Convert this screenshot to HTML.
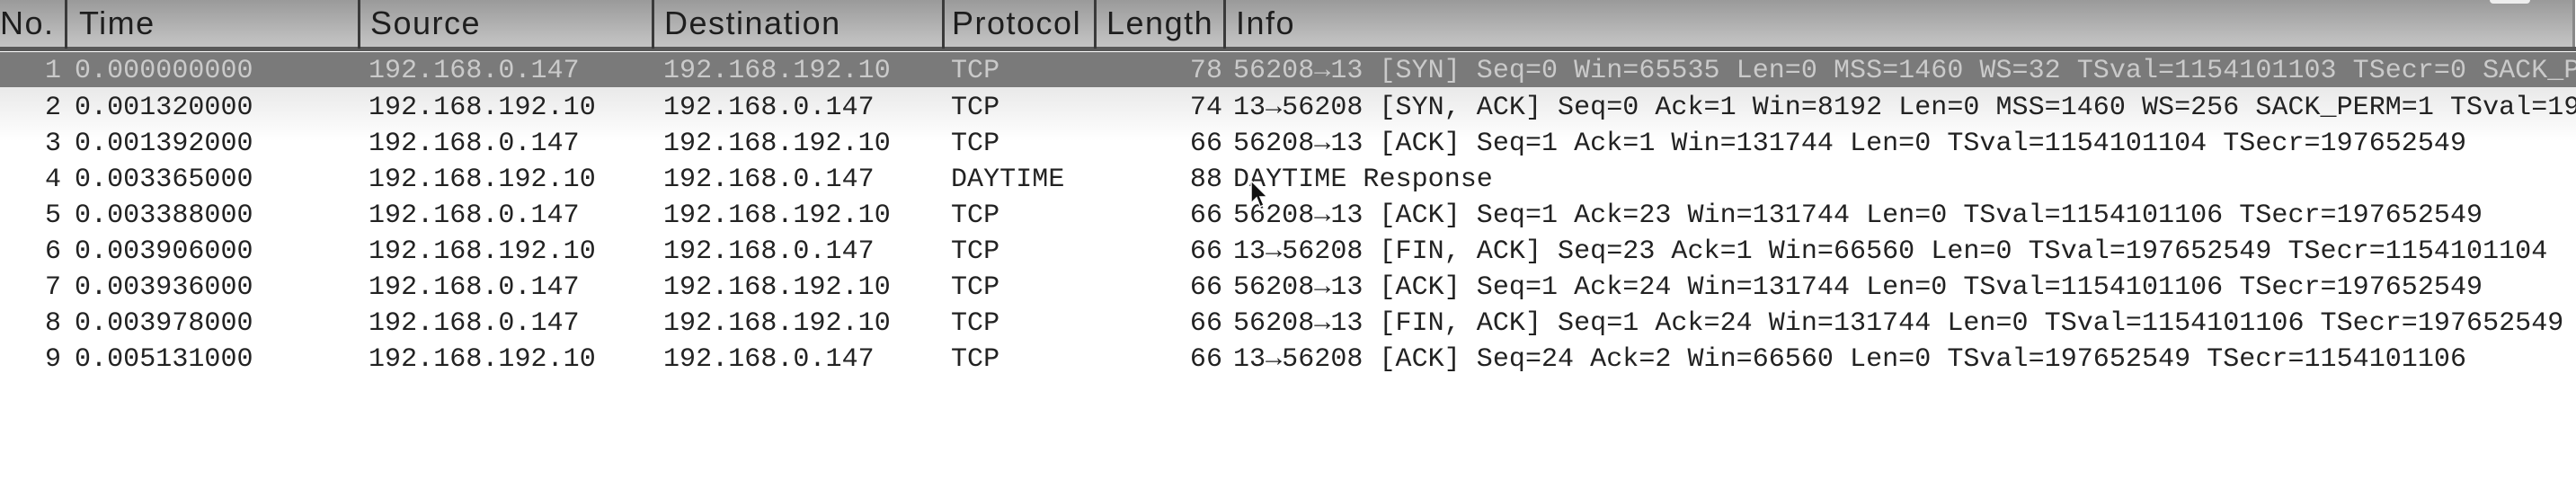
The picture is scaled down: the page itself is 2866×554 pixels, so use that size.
<!DOCTYPE html>
<html><head><meta charset="utf-8"><style>
html,body{margin:0;padding:0;width:2866px;height:554px;overflow:hidden;background:#fff;}
#hdr{position:absolute;left:0;top:0;width:2862px;height:53px;background:linear-gradient(#9a9a9a,#c6c6c6);border-right:3px solid #888;}
#hl{position:absolute;left:0;top:52px;width:2866px;height:5px;background:#5a5a5a;}
.h{position:absolute;top:2px;font-family:"Liberation Sans",sans-serif;font-size:36px;color:#1e1e1e;line-height:48px;letter-spacing:1.5px;}
.sep{position:absolute;top:0;width:3px;height:54px;background:#3a3a3a;}
#sel{position:absolute;left:0;top:58px;width:2866px;height:39px;background:#7a7a7a;}
#below{position:absolute;left:0;top:97px;width:2866px;height:60px;background:linear-gradient(#e9e9e9,#fff);}
.r{position:absolute;left:0;height:40px;line-height:40px;font-family:"Liberation Mono",monospace;font-size:30px;color:#222;white-space:pre;letter-spacing:0.05px;}
.r span{position:absolute;top:0;}
.s{color:#cacaca;}
.n{right:2798px;text-align:right;}
.len{right:1506px;text-align:right;}
</style></head><body>
<div id="hdr"></div>
<div id="hl"></div>
<div class="h" style="left:0">No.</div>
<div class="sep" style="left:72px"></div>
<div class="h" style="left:88px">Time</div>
<div class="sep" style="left:398px"></div>
<div class="h" style="left:412px">Source</div>
<div class="sep" style="left:725px"></div>
<div class="h" style="left:739px">Destination</div>
<div class="sep" style="left:1048px"></div>
<div class="h" style="left:1059px">Protocol</div>
<div class="sep" style="left:1217px"></div>
<div class="h" style="left:1231px">Length</div>
<div class="sep" style="left:1361px"></div>
<div class="h" style="left:1375px">Info</div>
<div style="position:absolute;left:2770px;top:0;width:45px;height:4px;background:#eee;border-radius:0 0 4px 4px"></div>
<div id="sel"></div>
<div id="below"></div>

<div class="r s" style="top:59px;width:2866px"><span class="n">1</span><span style="left:83px">0.000000000</span><span style="left:410px">192.168.0.147</span><span style="left:738px">192.168.192.10</span><span style="left:1058px">TCP</span><span class="len">78</span><span style="left:1372px">56208→13 [SYN] Seq=0 Win=65535 Len=0 MSS=1460 WS=32 TSval=1154101103 TSecr=0 SACK_PERM=1</span></div>
<div class="r" style="top:100px;width:2866px"><span class="n">2</span><span style="left:83px">0.001320000</span><span style="left:410px">192.168.192.10</span><span style="left:738px">192.168.0.147</span><span style="left:1058px">TCP</span><span class="len">74</span><span style="left:1372px">13→56208 [SYN, ACK] Seq=0 Ack=1 Win=8192 Len=0 MSS=1460 WS=256 SACK_PERM=1 TSval=197652549</span></div>
<div class="r" style="top:140px;width:2866px"><span class="n">3</span><span style="left:83px">0.001392000</span><span style="left:410px">192.168.0.147</span><span style="left:738px">192.168.192.10</span><span style="left:1058px">TCP</span><span class="len">66</span><span style="left:1372px">56208→13 [ACK] Seq=1 Ack=1 Win=131744 Len=0 TSval=1154101104 TSecr=197652549</span></div>
<div class="r" style="top:180px;width:2866px"><span class="n">4</span><span style="left:83px">0.003365000</span><span style="left:410px">192.168.192.10</span><span style="left:738px">192.168.0.147</span><span style="left:1058px">DAYTIME</span><span class="len">88</span><span style="left:1372px">DAYTIME Response</span></div>
<div class="r" style="top:220px;width:2866px"><span class="n">5</span><span style="left:83px">0.003388000</span><span style="left:410px">192.168.0.147</span><span style="left:738px">192.168.192.10</span><span style="left:1058px">TCP</span><span class="len">66</span><span style="left:1372px">56208→13 [ACK] Seq=1 Ack=23 Win=131744 Len=0 TSval=1154101106 TSecr=197652549</span></div>
<div class="r" style="top:260px;width:2866px"><span class="n">6</span><span style="left:83px">0.003906000</span><span style="left:410px">192.168.192.10</span><span style="left:738px">192.168.0.147</span><span style="left:1058px">TCP</span><span class="len">66</span><span style="left:1372px">13→56208 [FIN, ACK] Seq=23 Ack=1 Win=66560 Len=0 TSval=197652549 TSecr=1154101104</span></div>
<div class="r" style="top:300px;width:2866px"><span class="n">7</span><span style="left:83px">0.003936000</span><span style="left:410px">192.168.0.147</span><span style="left:738px">192.168.192.10</span><span style="left:1058px">TCP</span><span class="len">66</span><span style="left:1372px">56208→13 [ACK] Seq=1 Ack=24 Win=131744 Len=0 TSval=1154101106 TSecr=197652549</span></div>
<div class="r" style="top:340px;width:2866px"><span class="n">8</span><span style="left:83px">0.003978000</span><span style="left:410px">192.168.0.147</span><span style="left:738px">192.168.192.10</span><span style="left:1058px">TCP</span><span class="len">66</span><span style="left:1372px">56208→13 [FIN, ACK] Seq=1 Ack=24 Win=131744 Len=0 TSval=1154101106 TSecr=197652549</span></div>
<div class="r" style="top:380px;width:2866px"><span class="n">9</span><span style="left:83px">0.005131000</span><span style="left:410px">192.168.192.10</span><span style="left:738px">192.168.0.147</span><span style="left:1058px">TCP</span><span class="len">66</span><span style="left:1372px">13→56208 [ACK] Seq=24 Ack=2 Win=66560 Len=0 TSval=197652549 TSecr=1154101106</span></div>

<svg style="position:absolute;left:1390px;top:200px" width="24" height="34" viewBox="0 0 24 34"><path d="M2 1 L2 26 L8 20 L12 30 L16 28 L12 19 L20 19 Z" fill="#111" stroke="#fff" stroke-width="1.5"/></svg>
</body></html>
